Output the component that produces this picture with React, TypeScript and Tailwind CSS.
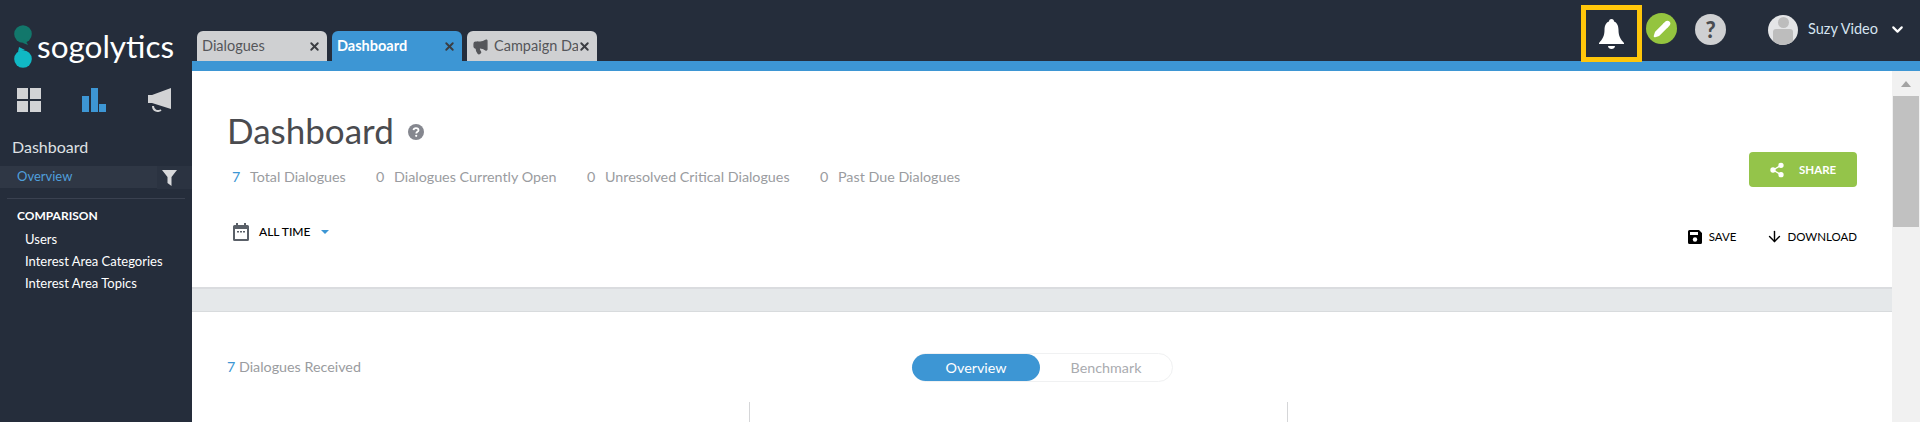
import React from "react";
import { ChevronDown, Pencil, X, Share2, ArrowDown, Megaphone } from "lucide-react";

const font = "font-['Lato','Open_Sans',sans-serif]";

const Logo = () => (
  <div className="flex items-center h-[43px] mt-[25px] ml-[14px]">
    <svg width="18" height="43" viewBox="0 0 18 43" className="shrink-0">
      <circle cx="9" cy="9" r="8.800" fill="#12776b" />
      <path d="M10 14l3 4 1 2-5-2z" fill="#12776b" />
      <circle cx="9" cy="34" r="8.800" fill="#10b8c4" />
      <path d="M5 22l6 3-7 2z" fill="#10b8c4" />
    </svg>
    <span className="ml-[5px] text-[31.500px] leading-none text-white font-normal font-['Lato',sans-serif]">
      sogolytics
    </span>
  </div>
);

const GridIcon = () => (
  <svg width="24" height="24" viewBox="0 0 24 24" fill="#d2d3d5">
    <rect width="11" height="11" />
    <rect x="13" width="11" height="11" />
    <rect y="13" width="11" height="11" />
    <rect x="13" y="13" width="11" height="11" />
  </svg>
);

const BarsIcon = () => (
  <svg width="24" height="24" viewBox="0 0 24 24">
    <rect y="8" width="7" height="16" fill="#3d96d4" />
    <rect x="9" width="7" height="24" fill="#3d96d4" />
    <rect x="17" y="16" width="7" height="8" fill="#3d96d4" />
  </svg>
);

const HornIcon = () => (
  <svg width="24" height="24" viewBox="0 0 24 24" fill="#d2d3d5">
    <path d="M24 0v21L5 15H1V7h4z" />
    <path d="M6 18c0 5 5 6 8 4" fill="none" stroke="#d2d3d5" strokeWidth="2" />
  </svg>
);

const FilterIcon = () => (
  <svg width="15" height="16" viewBox="0 0 15 16" fill="#d8d9db">
    <path d="M0 0h15L9.500 7v9l-4-3V7z" />
  </svg>
);

const BellIcon = () => (
  <svg width="25" height="30" viewBox="0 0 25 30" fill="white">
    <circle cx="12.500" cy="2.500" r="2.500" />
    <path d="M12.500 2c5 0 7 4 7 9 0 6 2 9 5.500 13v1H0v-1c3.500-4 5.500-7 5.500-13 0-5 2-9 7-9z" />
    <path d="M9 27h7c0 4-7 4-7 0z" />
  </svg>
);

const HelpDot = () => (
  <svg width="16" height="16" viewBox="0 0 16 16" className="ml-[14px] mt-[3px]">
    <circle cx="8" cy="8" r="8" fill="#85878f" />
    <path d="M5.500 6.200C5.700 4.800 6.800 4.200 8 4.200c1.400 0 2.500.8 2.500 2 0 1.700-2.200 1.600-2.200 3.200" fill="none" stroke="white" strokeWidth="1.800" />
    <circle cx="8.200" cy="11.800" r="1.100" fill="white" />
  </svg>
);

const CalendarIcon = () => (
  <svg width="16" height="18" viewBox="0 0 16 18" fill="#5a6068">
    <path d="M3 0h2v2h6V0h2v2h1.500A1.500 1.500 0 0 1 16 3.500v13a1.500 1.500 0 0 1-1.500 1.500h-13A1.500 1.500 0 0 1 0 16.500v-13A1.500 1.500 0 0 1 1.500 2H3zM2 6v10h12V6z" />
    <rect x="4" y="8" width="2" height="1.500" />
    <rect x="7" y="8" width="2" height="1.500" />
    <rect x="10" y="8" width="2" height="1.500" />
  </svg>
);

const SaveIcon = () => (
  <svg width="14" height="14" viewBox="0 0 14 14" fill="black">
    <path d="M1.500 0H11l3 3v9.500a1.500 1.500 0 0 1-1.500 1.500h-11A1.500 1.500 0 0 1 0 12.500v-11A1.500 1.500 0 0 1 1.500 0zM2 2v3h8V2z" fillRule="evenodd" />
    <circle cx="7" cy="9.500" r="2.200" fill="white" />
  </svg>
);

const Tab = ({ label, active, icon }: { label: string; active?: boolean; icon?: boolean }) => (
  <div
    className={`w-[130px] h-[30px] rounded-t-[6px] flex items-center pl-[5px] pr-[6px] ${
      active ? "bg-[#3d96d4] text-white font-bold" : "bg-[#cfd0d2] text-[#55565a]"
    }`}
  >
    {icon && <Megaphone size={17} className="mr-[5px] shrink-0 text-[#55565a] fill-[#55565a]" />}
    <span className="flex-1 text-[14.500px] overflow-hidden whitespace-nowrap">{label}</span>
    <X size={13} strokeWidth={3.5} className="shrink-0 text-[#3b3d42]" />
  </div>
);

const Stat = ({ value, label, blue, className }: { value: number; label: string; blue?: boolean; className: string }) => (
  <div className={`flex text-[14.300px] text-[#9a9ca0] ${className}`}>
    <span className={`w-[18px] ${blue ? "text-[#3d96d4]" : ""}`}>{value}</span>
    <span>{label}</span>
  </div>
);

export default function App() {
  return (
    <div className={`w-[1920px] h-[422px] overflow-hidden flex bg-[#252d3b] ${font}`}>
      <aside className="w-[192px] shrink-0 flex flex-col">
        <Logo />
        <div className="flex gap-[41px] ml-[17px] mt-[20px]">
          <GridIcon />
          <BarsIcon />
          <HornIcon />
        </div>
        <div className="ml-[12px] mt-[25px] text-[16px] leading-[20px] text-[#dfe1e4]">Dashboard</div>
        <div className="mt-[9px] h-[22px] bg-[#2f3745] flex items-center justify-between">
          <span className="ml-[17px] text-[13px] text-[#4f9fdc]">Overview</span>
          <div className="w-[35px] h-[23px] mt-px bg-[#2b3341] flex items-center pl-[5px]">
            <FilterIcon />
          </div>
        </div>
        <div className="mx-[7px] mt-[10px] h-px bg-[#3a4150]" />
        <div className="ml-[17px] mt-[10px] text-[12px] leading-[14px] font-bold text-white">COMPARISON</div>
        <ul className="ml-[25px] mt-[5px] text-[13px] leading-[22px] text-white">
          <li>Users</li>
          <li>Interest Area Categories</li>
          <li>Interest Area Topics</li>
        </ul>
      </aside>

      <div className="flex-1 flex flex-col min-w-0">
        <header className="h-[61px] shrink-0 flex relative z-10">
          <div className="flex gap-[5px] ml-[5px] mt-[31px]">
            <Tab label="Dialogues" />
            <Tab label="Dashboard" active />
            <Tab label="Campaign Dashboard" icon />
          </div>
          <div className="ml-auto flex items-start">
            <div className="mt-[5px] w-[61px] h-[57px] border-[5px] border-[#ffc60a] flex items-center justify-center">
              <BellIcon />
            </div>
            <div className="mt-[13px] ml-[4px] w-[31px] h-[31px] rounded-full bg-[#94c43f] flex items-center justify-center">
              <Pencil size={18} className="text-white fill-white" />
            </div>
            <div className="mt-[14px] ml-[18px] w-[31px] h-[31px] rounded-full bg-[#cfd0d2] flex items-center justify-center text-[22px] font-black text-[#4a4c50]">
              ?
            </div>
            <div className="mt-[15px] ml-[42px] w-[30px] h-[30px] rounded-full bg-[#e4e5e7] overflow-hidden flex flex-col items-center">
              <div className="mt-[2px] w-[11px] h-[11px] rounded-full bg-[#bdbdbd]" />
              <div className="mt-[1px] w-[20px] h-[16px] rounded-[3px] bg-[#bdbdbd]" />
            </div>
            <span className="mt-[19px] ml-[10px] text-[14.500px] leading-[20px] text-[#d6e4f0]">Suzy Video</span>
            <ChevronDown size={17} strokeWidth={3} className="mt-[21px] ml-[11px] mr-[14px] text-white" />
          </div>
        </header>
        <div className="h-[10px] shrink-0 bg-[#3d96d4]" />

        <div className="flex-1 flex min-h-0">
          <main className="flex-1 bg-white min-w-0">
            <section className="h-[216px] flex justify-between pl-[37px] pr-[35px]">
              <div>
                <div className="flex items-center mt-[39px] -ml-[2px]">
                  <h1 className="text-[35px] leading-[40px] text-[#4a4b4f] font-normal">Dashboard</h1>
                  <HelpDot />
                </div>
                <div className="flex mt-[16px] ml-[3px]">
                  <Stat value={7} label="Total Dialogues" blue className="w-[144px]" />
                  <Stat value={0} label="Dialogues Currently Open" className="w-[211px]" />
                  <Stat value={0} label="Unresolved Critical Dialogues" className="w-[233px]" />
                  <Stat value={0} label="Past Due Dialogues" className="w-[160px]" />
                </div>
                <div className="flex items-center mt-[36px] ml-[4px]">
                  <CalendarIcon />
                  <span className="ml-[10px] text-[12px] font-medium text-black">ALL TIME</span>
                  <span className="ml-[10px] border-x-[4px] border-x-transparent border-t-[4px] border-t-[#3d96d4]" />
                </div>
              </div>
              <div className="flex flex-col items-end">
                <button className="mt-[81px] w-[108px] h-[35px] rounded-[4px] bg-[#94c44a] flex items-center pl-[20px] text-white">
                  <Share2 size={16} className="fill-white" />
                  <span className="ml-[14px] text-[11.500px] font-bold">SHARE</span>
                </button>
                <div className="flex items-center mt-[41px] text-[11.500px] text-black">
                  <SaveIcon />
                  <span className="ml-[7px]">SAVE</span>
                  <ArrowDown size={17} strokeWidth={2} className="ml-[30px]" />
                  <span className="ml-[4px]">DOWNLOAD</span>
                </div>
              </div>
            </section>

            <div className="h-[25px] bg-[#e5e8ea] border-t-2 border-b border-t-[#dadcdf] border-b-[#d8dbdd]" />

            <section className="pl-[35px]">
              <div className="flex items-center mt-[41px] h-[29px]">
                <p className="w-[685px] text-[14.300px] -mt-[2px] text-[#9a9ca0]">
                  <span className="text-[#3d96d4]">7</span> Dialogues Received
                </p>
                <div className="w-[261px] h-[29px] rounded-full border border-[#f0f1f2] flex text-[14.300px]">
                  <div className="w-[128px] h-full rounded-full bg-[#3d96d4] text-white flex items-center justify-center -ml-px">
                    Overview
                  </div>
                  <div className="flex-1 flex items-center justify-center text-[#a9abaf]">Benchmark</div>
                </div>
              </div>
              <div className="flex mt-[20px] h-[20px]">
                <div className="ml-[522px] w-px bg-[#d5d6d8]" />
                <div className="ml-[537px] w-px bg-[#d5d6d8]" />
              </div>
            </section>
          </main>

          <div className="w-[28px] shrink-0 bg-[#f1f1f1] flex flex-col items-center">
            <span className="mt-[10px] border-x-[5px] border-x-transparent border-b-[6px] border-b-[#a3a3a3]" />
            <div className="mt-[9px] w-[26px] h-[131px] bg-[#c1c1c1]" />
          </div>
        </div>
      </div>
    </div>
  );
}
